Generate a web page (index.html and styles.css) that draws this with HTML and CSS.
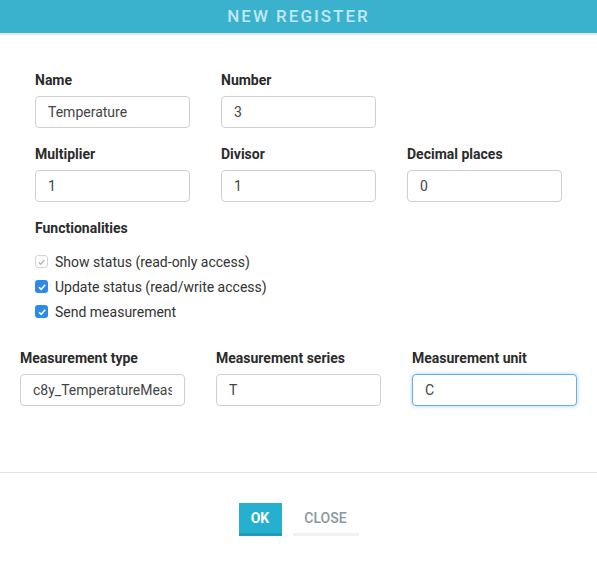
FILE: index.html
```html
<!DOCTYPE html>
<html>
<head>
<meta charset="utf-8">
<link rel="stylesheet" href="styles.css">
</head>
<body>
<div class="modal">
  <div class="modal-header"><h1 class="title">NEW REGISTER</h1></div>
  <div class="modal-body">
    <div class="section">
      <div class="row">
        <div class="field"><label class="label">Name</label><input class="input" value="Temperature"></div>
        <div class="field"><label class="label">Number</label><input class="input" value="3"></div>
      </div>
      <div class="row">
        <div class="field"><label class="label">Multiplier</label><input class="input" value="1"></div>
        <div class="field"><label class="label">Divisor</label><input class="input" value="1"></div>
        <div class="field"><label class="label">Decimal places</label><input class="input" value="0"></div>
      </div>
      <div class="label">Functionalities</div>
      <div class="checks">
        <label class="check"><span class="box box-disabled"><svg viewBox="0 0 12 12"><path d="M3 6.2 L5.2 8.4 L9.2 3.8" fill="none" stroke="#b5b5b5" stroke-width="1.4"/></svg></span>Show status (read-only access)</label>
        <label class="check"><span class="box box-on"><svg viewBox="0 0 12 12"><path d="M3 6.2 L5.2 8.4 L9.2 3.8" fill="none" stroke="#fff" stroke-width="1.6"/></svg></span>Update status (read/write access)</label>
        <label class="check"><span class="box box-on"><svg viewBox="0 0 12 12"><path d="M3 6.2 L5.2 8.4 L9.2 3.8" fill="none" stroke="#fff" stroke-width="1.6"/></svg></span>Send measurement</label>
      </div>
    </div>
    <div class="row row-wide">
      <div class="field field-wide"><label class="label">Measurement type</label><input class="input" value="c8y_TemperatureMeasurement"></div>
      <div class="field field-wide"><label class="label">Measurement series</label><input class="input" value="T"></div>
      <div class="field field-wide"><label class="label">Measurement unit</label><input class="input input-focus" value="C"></div>
    </div>
  </div>
  <div class="modal-footer">
    <button class="btn btn-primary">OK</button>
    <button class="btn btn-link">CLOSE</button>
  </div>
</div>
</body>
</html>
```
FILE: styles.css
```css
* { box-sizing: border-box; }
html, body { margin: 0; padding: 0; background: #fff; }
body { font-family: Roboto, "Noto Sans", sans-serif; color: #333; }

.modal { width: 597px; height: 565px; }

.modal-header {
  height: 35px;
  background: #3ab2cd;
  border-bottom: 2px solid #e3e6e8;
  display: flex;
  align-items: center;
  justify-content: center;
}
.title {
  margin: 0;
  font-size: 17px;
  font-weight: 500;
  letter-spacing: 2px;
  color: #c0e8f1;
  line-height: 33px;
}

.modal-body {
  padding: 36px 20px 0 20px;
  height: 438px;
  border-bottom: 1px solid #e5e5e5;
}
.section { padding-left: 15px; }

.row { display: flex; gap: 31px; margin-bottom: 17px; }
.row-wide { margin-top: 25px; margin-bottom: 0; }

.field { width: 155px; display: flex; flex-direction: column; }
.field-wide { width: 165px; }

.label {
  display: block;
  font-size: 14px;
  font-weight: 700;
  line-height: 18px;
  color: #2b2b2b;
  margin-bottom: 7px;
}

.input {
  height: 32px;
  width: 100%;
  border: 1px solid #cfcfcf;
  border-radius: 4px;
  padding: 0 12px;
  font-family: inherit;
  font-size: 14px;
  color: #444;
  background: #fff;
  outline: none;
}
.input-focus {
  border-color: #66afe9;
  box-shadow: 0 0 4px rgba(102, 175, 233, 0.6);
}

.checks { margin-top: 12px; display: flex; flex-direction: column; }
.check {
  height: 25px;
  display: flex;
  align-items: center;
  font-size: 14px;
  color: #333;
  gap: 7px;
}
.box {
  width: 13px;
  height: 13px;
  border-radius: 3px;
  display: inline-flex;
  align-items: center;
  justify-content: center;
}
.box svg { width: 12px; height: 12px; }
.box-on { background: #2d8ae6; }
.box-disabled { border: 1px solid #d4d4d4; background: #fff; }

.modal-footer {
  display: flex;
  justify-content: center;
  gap: 11px;
  padding-top: 30px;
}
.btn {
  height: 33px;
  border: 0;
  font-family: inherit;
  font-size: 14px;
  font-weight: 700;
  padding: 0;
  cursor: pointer;
}
.btn-primary {
  width: 43px;
  background: #26b0cf;
  color: #fff;
  border-bottom: 3px solid #1f9bb8;
}
.btn-link {
  width: 66px;
  background: transparent;
  color: #8a979e;
  font-weight: 500;
  border-bottom: 3px solid #f1f1f1;
}
```
